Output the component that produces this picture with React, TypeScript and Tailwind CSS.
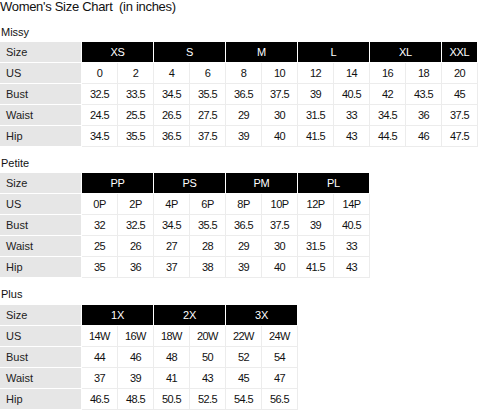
type Chart = {
  name: string;
  groups: string[];
  rows: { label: string; values: string[] }[];
};

const charts: Chart[] = [
  {
    name: "Missy",
    groups: ["XS", "S", "M", "L", "XL", "XXL"],
    rows: [
      { label: "US", values: ["0", "2", "4", "6", "8", "10", "12", "14", "16", "18", "20"] },
      { label: "Bust", values: ["32.5", "33.5", "34.5", "35.5", "36.5", "37.5", "39", "40.5", "42", "43.5", "45"] },
      { label: "Waist", values: ["24.5", "25.5", "26.5", "27.5", "29", "30", "31.5", "33", "34.5", "36", "37.5"] },
      { label: "Hip", values: ["34.5", "35.5", "36.5", "37.5", "39", "40", "41.5", "43", "44.5", "46", "47.5"] },
    ],
  },
  {
    name: "Petite",
    groups: ["PP", "PS", "PM", "PL"],
    rows: [
      { label: "US", values: ["0P", "2P", "4P", "6P", "8P", "10P", "12P", "14P"] },
      { label: "Bust", values: ["32", "32.5", "34.5", "35.5", "36.5", "37.5", "39", "40.5"] },
      { label: "Waist", values: ["25", "26", "27", "28", "29", "30", "31.5", "33"] },
      { label: "Hip", values: ["35", "36", "37", "38", "39", "40", "41.5", "43"] },
    ],
  },
  {
    name: "Plus",
    groups: ["1X", "2X", "3X"],
    rows: [
      { label: "US", values: ["14W", "16W", "18W", "20W", "22W", "24W"] },
      { label: "Bust", values: ["44", "46", "48", "50", "52", "54"] },
      { label: "Waist", values: ["37", "39", "41", "43", "45", "47"] },
      { label: "Hip", values: ["46.5", "48.5", "50.5", "52.5", "54.5", "56.5"] },
    ],
  },
];

function SizeTable({ chart }: { chart: Chart }) {
  // last group spans a single column when the count is odd (XXL)
  const cols = chart.rows[0].values.length;
  const spans = chart.groups.map((_, i) => (i === chart.groups.length - 1 && cols % 2 === 1 ? 1 : 2));

  return (
    <div className="flex flex-col">
      <div className="flex">
        <div className="w-[75px] pl-[6px] h-[20px] box-content border-r border-b border-white bg-[#e6e6e6] flex items-center text-[11px] text-[#222]">
          Size
        </div>
        {chart.groups.map((g, i) => (
          <div
            key={g}
            className={`h-[20px] box-content border-r border-b border-white bg-black text-white flex items-center justify-center text-[11px] tracking-[-0.3px] ${
              spans[i] === 2 ? "w-[71px]" : "w-[35px]"
            }`}
          >
            {g}
          </div>
        ))}
      </div>
      {chart.rows.map((row) => (
        <div key={row.label} className="flex">
          <div className="w-[75px] pl-[6px] h-[20px] box-content border-r border-b border-white bg-[#e6e6e6] flex items-center text-[11px] text-[#222]">
            {row.label}
          </div>
          {row.values.map((v, i) => (
            <div
              key={i}
              className="w-[35px] h-[20px] box-content border-r border-b border-[#ececec] bg-white flex items-center justify-center text-[11px] tracking-[-0.6px] text-[#111]"
            >
              {v}
            </div>
          ))}
        </div>
      ))}
    </div>
  );
}

export default function App() {
  return (
    <div className="w-[478px] h-[410px] overflow-hidden bg-white font-['Liberation_Sans',Arial,sans-serif] text-[#111]">
      <div className="h-[13px] leading-[13px] text-[13px] tracking-[-0.3px] whitespace-pre">Women's Size Chart  (in inches)</div>
      {charts.map((c, i) => (
        <div key={c.name} className={i === 0 ? "mt-[12px]" : "mt-[9px]"}>
          <div className="h-[14px] leading-[14px] text-[11px] pl-px">{c.name}</div>
          <div className={i === 2 ? "mt-[4px]" : "mt-[3px]"}>
            <SizeTable chart={c} />
          </div>
        </div>
      ))}
    </div>
  );
}
